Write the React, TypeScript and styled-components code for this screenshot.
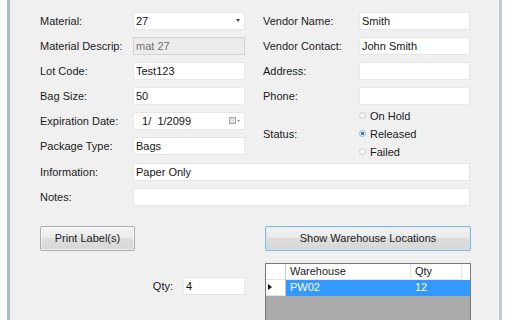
import React from 'react';
import styled, { createGlobalStyle } from 'styled-components';

const GlobalStyle = createGlobalStyle`
  html, body {
    margin: 0;
    padding: 0;
    background: #ffffff;
  }
  body {
    font-family: "Liberation Sans", Arial, sans-serif;
    font-size: 11px;
    color: #1b1b1b;
  }
`;

const Frame = styled.div`
  display: flex;
  width: 508px;
  height: 320px;
  overflow: hidden;
`;

const Gutter = styled.div`
  width: 7px;
  background: #fbfcfc;
`;

const WindowEdge = styled.div<{ $color: string }>`
  width: 3px;
  background: ${p => p.$color};
`;

const Panel = styled.div`
  width: 489px;
  background: #f0f0f0;
  padding: 11px 0 0 30px;
  box-sizing: border-box;
  display: flex;
  flex-direction: column;
`;

const FieldGrid = styled.div`
  display: grid;
  grid-template-columns: 93px 112px 18px 96px 111px;
  grid-auto-rows: 19px;
  row-gap: 6.2px;
`;

const Label = styled.div<{ $col: number; $row?: string }>`
  grid-column: ${p => p.$col};
  ${p => (p.$row ? `grid-row: ${p.$row};` : '')}
  display: flex;
  align-items: center;
  white-space: nowrap;
`;

const Cell = styled.div<{ $col: string; $row?: string }>`
  grid-column: ${p => p.$col};
  ${p => (p.$row ? `grid-row: ${p.$row};` : '')}
  display: flex;
  align-items: center;
`;

const TextBox = styled.div<{ $disabled?: boolean }>`
  flex: 1;
  height: 18px;
  box-sizing: border-box;
  background: ${p => (p.$disabled ? '#ececec' : '#ffffff')};
  border: 1px solid ${p => (p.$disabled ? '#d2d2d2' : '#e6e6e6')};
  color: ${p => (p.$disabled ? '#6f6f6f' : '#151515')};
  padding: 0 2px;
  display: flex;
  align-items: center;
  white-space: pre;
`;

const Picker = styled(TextBox)`
  justify-content: space-between;
  padding-right: 4px;
`;

const RadioGroup = styled.div`
  display: flex;
  flex-direction: column;
  justify-content: center;
  gap: 4px;
`;

const RadioRow = styled.div`
  display: flex;
  align-items: center;
  gap: 4px;
  height: 14px;
`;

const RadioDot = styled.span<{ $checked?: boolean }>`
  width: 5px;
  height: 5px;
  border-radius: 50%;
  border: 1px solid ${p => (p.$checked ? '#9dbbd2' : '#cdcdcd')};
  background: ${p => (p.$checked ? 'radial-gradient(circle, #3a74a6 0 1.3px, #e4eef6 1.8px)' : '#f7f7f7')};
`;

const ActionGrid = styled.div`
  display: grid;
  grid-template-columns: 205px 206px;
  column-gap: 20px;
  margin-top: 19.6px;
`;

const Button = styled.button<{ $default?: boolean; $width?: string }>`
  width: ${p => p.$width || '100%'};
  height: 25px;
  font-family: inherit;
  font-size: 11px;
  color: #1b1b1b;
  border: 1px solid ${p => (p.$default ? '#86b8da' : '#adadad')};
  border-radius: 2px;
  background: linear-gradient(#f2f2f2, #ebebeb 45%, #dddddd 50%, #d8d8d8);
  box-shadow: inset 0 0 0 1px ${p => (p.$default ? 'rgba(200,230,250,0.6)' : 'rgba(255,255,255,0.5)')};
  padding: 0;
`;

const QtyCell = styled.div`
  display: flex;
  justify-content: flex-end;
  align-items: center;
  gap: 10px;
  height: 18px;
  margin-top: 26px;
`;

const QtyBox = styled(TextBox)`
  flex: none;
  width: 62px;
`;

const DataGrid = styled.div`
  margin-top: 12px;
  height: 70px;
  background: #ababab;
  border: 1px solid #7a7a7a;
  box-sizing: border-box;
`;

const GridRow = styled.div<{ $selected?: boolean }>`
  display: grid;
  grid-template-columns: 20px 125px 51px;
  height: 16px;
  background: ${p => (p.$selected ? '#3399ff' : '#ffffff')};
  color: ${p => (p.$selected ? '#ffffff' : '#1b1b1b')};
`;

const GridCell = styled.div<{ $selected?: boolean }>`
  display: flex;
  align-items: center;
  padding-left: 4px;
  border-right: 1px solid ${p => (p.$selected ? '#3399ff' : '#e6e6e6')};
  border-bottom: 1px solid ${p => (p.$selected ? '#3399ff' : '#e6e6e6')};
  box-sizing: border-box;
`;

const RowHeader = styled.div`
  background: #ffffff;
  border-right: 1px solid #c8c8c8;
  border-bottom: 1px solid #e3e3e3;
  box-sizing: border-box;
  display: flex;
  align-items: center;
  padding-left: 2px;
`;

const ComboArrow = () => (
  <svg width="4" height="3" viewBox="0 0 4 3">
    <path d="M0 0 H4 L2 3 Z" fill="#444" />
  </svg>
);

const CalendarIcon = () => (
  <svg width="11" height="8" viewBox="0 0 11 8">
    <rect x="0.5" y="0.5" width="6" height="6" fill="#e4e4e4" stroke="#a8a8a8" />
    <path d="M8 3 H11 L9.5 4.8 Z" fill="#888" />
  </svg>
);

const RowPointer = () => (
  <svg width="4" height="6" viewBox="0 0 4 6">
    <path d="M0 0 L4 3 L0 6 Z" fill="#111" />
  </svg>
);

const App = () => (
  <>
    <GlobalStyle />
    <Frame>
      <Gutter />
      <WindowEdge $color="#a6bcc8" />
      <Panel>
        <FieldGrid>
          <Label $col={1}>Material:</Label>
          <Cell $col="2">
            <Picker>27<ComboArrow /></Picker>
          </Cell>
          <Label $col={4}>Vendor Name:</Label>
          <Cell $col="5"><TextBox>Smith</TextBox></Cell>

          <Label $col={1}>Material Descrip:</Label>
          <Cell $col="2"><TextBox $disabled>mat 27</TextBox></Cell>
          <Label $col={4}>Vendor Contact:</Label>
          <Cell $col="5"><TextBox>John Smith</TextBox></Cell>

          <Label $col={1}>Lot Code:</Label>
          <Cell $col="2"><TextBox>Test123</TextBox></Cell>
          <Label $col={4}>Address:</Label>
          <Cell $col="5"><TextBox /></Cell>

          <Label $col={1}>Bag Size:</Label>
          <Cell $col="2"><TextBox>50</TextBox></Cell>
          <Label $col={4}>Phone:</Label>
          <Cell $col="5"><TextBox /></Cell>

          <Label $col={1} $row="5">Expiration Date:</Label>
          <Cell $col="2" $row="5">
            <Picker>{'  1/  1/2099'}<CalendarIcon /></Picker>
          </Cell>
          <Label $col={4} $row="5 / span 2">Status:</Label>
          <Cell $col="5" $row="5 / span 2">
            <RadioGroup>
              <RadioRow><RadioDot />On Hold</RadioRow>
              <RadioRow><RadioDot $checked />Released</RadioRow>
              <RadioRow><RadioDot />Failed</RadioRow>
            </RadioGroup>
          </Cell>

          <Label $col={1} $row="6">Package Type:</Label>
          <Cell $col="2" $row="6"><TextBox>Bags</TextBox></Cell>

          <Label $col={1}>Information:</Label>
          <Cell $col="2 / span 4"><TextBox>Paper Only</TextBox></Cell>

          <Label $col={1}>Notes:</Label>
          <Cell $col="2 / span 4"><TextBox /></Cell>
        </FieldGrid>

        <ActionGrid>
          <div>
            <Button $width="95px">Print Label(s)</Button>
          </div>
          <Button $default>Show Warehouse Locations</Button>
          <QtyCell>
            <span>Qty:</span>
            <QtyBox>4</QtyBox>
          </QtyCell>
          <DataGrid>
            <GridRow>
              <RowHeader />
              <GridCell>Warehouse</GridCell>
              <GridCell>Qty</GridCell>
            </GridRow>
            <GridRow $selected>
              <RowHeader><RowPointer /></RowHeader>
              <GridCell $selected>PW02</GridCell>
              <GridCell $selected>12</GridCell>
            </GridRow>
          </DataGrid>
        </ActionGrid>
      </Panel>
      <WindowEdge $color="#bccad5" />
    </Frame>
  </>
);

export default App;
